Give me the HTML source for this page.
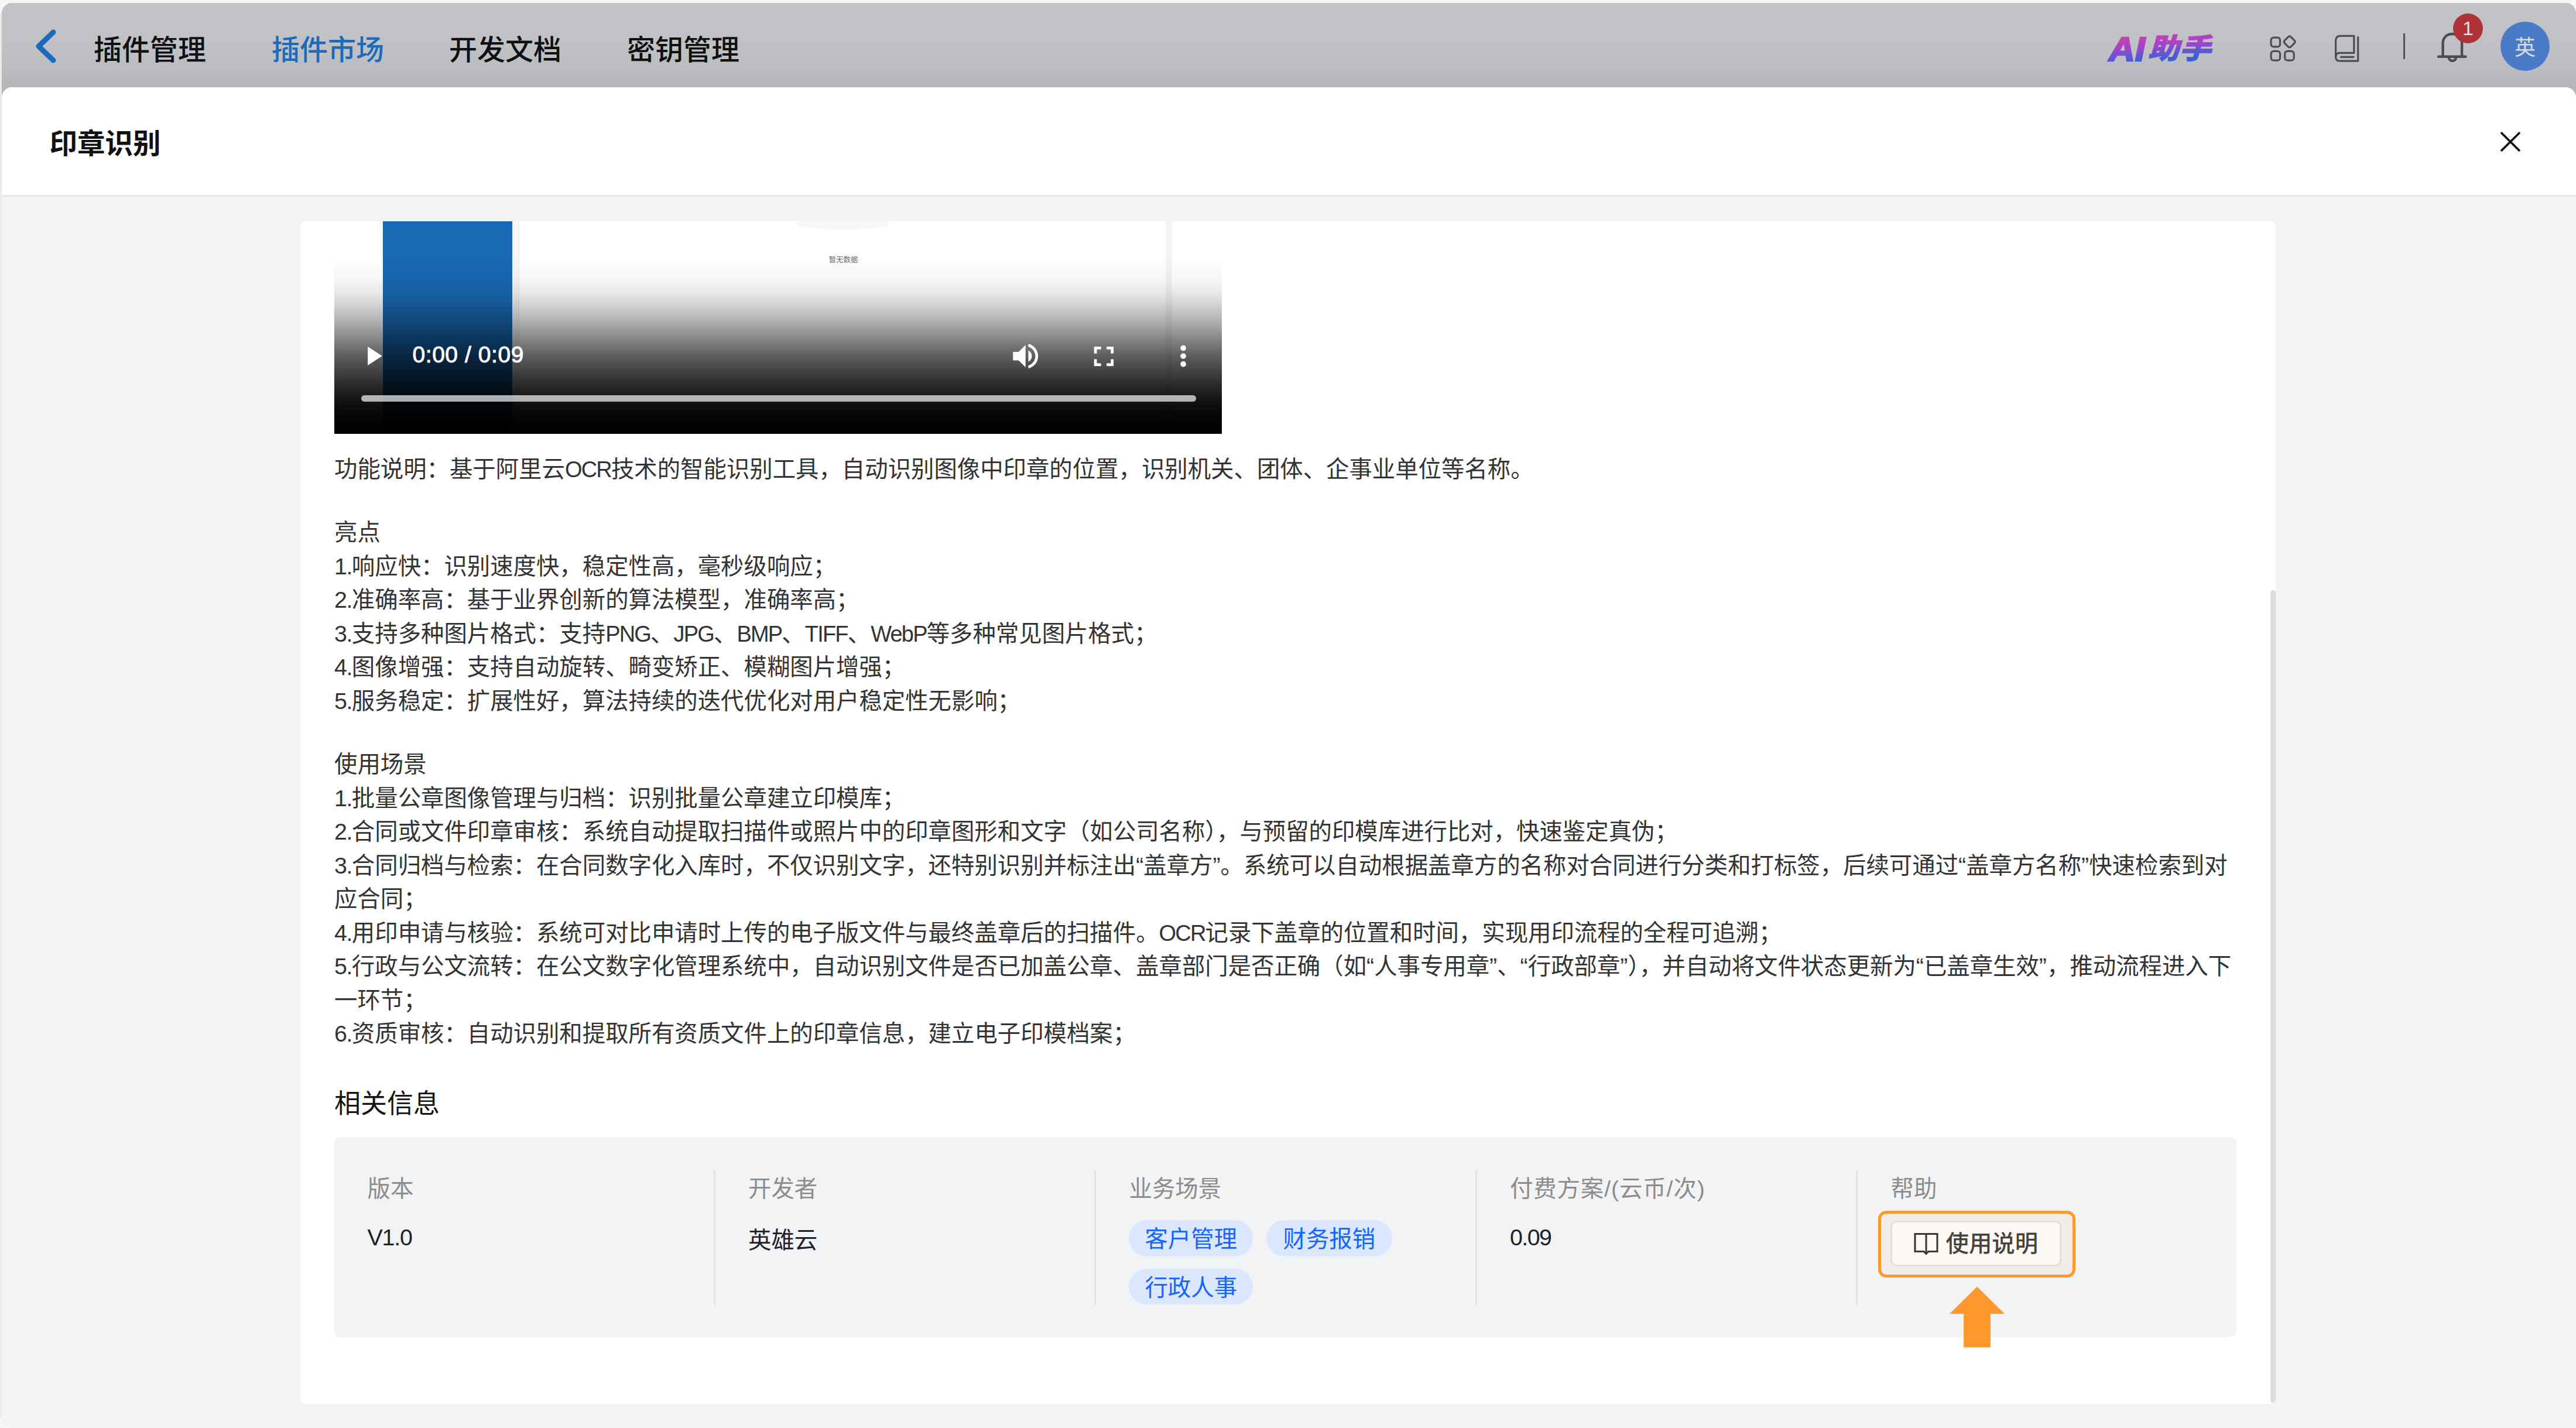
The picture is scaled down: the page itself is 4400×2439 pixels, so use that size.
<!DOCTYPE html>
<html lang="zh-CN">
<head>
<meta charset="utf-8">
<title>印章识别</title>
<style>
html,body{margin:0;padding:0}
body{width:4400px;height:2439px;overflow:hidden;position:relative;background:#f6f6f6;
  font-family:"Liberation Sans","Noto Sans CJK SC",sans-serif;color:#333}
*{box-sizing:border-box}
.abs{position:absolute}
#frame{position:absolute;left:3px;top:5px;width:4397px;height:2434px;border-radius:18px 18px 0 18px;overflow:hidden;background:#f2f3f5}
/* coordinates inside #frame are page coords minus (3,5) */
#topbar{position:absolute;left:0;top:0;width:4397px;height:175px;
  background:linear-gradient(to bottom,#c2c3c7 0%,#c1c2c6 40%,#bcbdc1 75%,#b4b5b9 100%) no-repeat 0 0/100% 146px,#b4b5b9}
.nav{position:absolute;top:47px;height:68px;line-height:68px;font-size:48px;font-weight:500;color:#0f1012;white-space:nowrap}
.nav.on{color:#1c6abb}
#panel{position:absolute;left:0;top:144px;width:4397px;height:2290px;background:#f2f3f5;border-radius:18px 18px 0 0;overflow:hidden}
#phead{position:absolute;left:0;top:0;width:4397px;height:187px;background:#fff;border-bottom:3px solid #e5e6e9}
#ptitle{position:absolute;left:81.5px;top:62px;height:70px;line-height:70px;font-size:47.5px;font-weight:700;color:#111}
#card{position:absolute;left:510px;top:228.5px;width:3374px;height:2020px;background:#fff;border-radius:8px;overflow:hidden}
/* inside card: page coords minus (513,377.5) */
#video{position:absolute;left:57.5px;top:-200px;width:1516.5px;height:563px;background:#fff;overflow:hidden}
/* inside video: page coords minus (570.5,177.5) */
#vgrad{position:absolute;left:0;top:260.5px;width:100%;height:302.5px;
 background:linear-gradient(to bottom,rgba(0,0,0,0) 0%,rgba(0,0,0,.035) 12.7%,rgba(0,0,0,.10) 21.5%,rgba(0,0,0,.215) 30%,rgba(0,0,0,.35) 39%,rgba(0,0,0,.50) 48%,rgba(0,0,0,.64) 56.7%,rgba(0,0,0,.75) 65.5%,rgba(0,0,0,.855) 74.3%,rgba(0,0,0,.94) 83%,rgba(0,0,0,.985) 92%,#000 100%)}
#vtime{position:absolute;left:134px;top:405.5px;height:46px;line-height:46px;font-size:39px;color:#fff;white-space:nowrap;letter-spacing:.55px;-webkit-text-stroke:.9px #fff}
#vbar{position:absolute;left:46px;top:497px;width:1426px;height:11.5px;border-radius:6px;background:rgba(255,255,255,.68)}
#desc{position:absolute;left:58px;top:395px;font-size:39.4px;line-height:57.5px;color:#333;white-space:nowrap}
#desc p{margin:0;padding:0}
#desc span{line-height:0}
#desc .la{font-size:38px;letter-spacing:-1.8px}
#desc .nu{letter-spacing:-1.5px}
#desc p.bl{height:51.1px}
#rel{position:absolute;left:58px;top:1476px;height:64px;line-height:64px;font-size:45px;font-weight:400;color:#141414;white-space:nowrap}
#info{position:absolute;left:58px;top:1564.8px;width:3249px;height:341.5px;border-radius:11px;background:#f2f3f5}
.col{position:absolute;top:56px;height:231px;width:650.5px;border-right:3px solid #e1e2e6}
.lab{position:absolute;left:56.5px;top:2.8px;height:58px;line-height:58px;font-size:39.4px;color:#8c8c8c;white-space:nowrap}
.val{position:absolute;left:56.5px;top:86px;height:58px;line-height:58px;font-size:39.4px;color:#1d2129;white-space:nowrap}
.tag{position:absolute;height:61.5px;line-height:65.5px;border-radius:31px;background:#dbe7fe;color:#1664ff;font-size:39.4px;padding:0 27.2px;white-space:nowrap;overflow:hidden}

</style>
</head>
<body>
<div class="abs" style="left:0;top:22px;width:3px;height:2400px;background:#eaeae8"></div>
<div id="frame">
  <div id="topbar">
    <svg class="abs" style="left:55px;top:43px" width="44" height="66" viewBox="0 0 44 66"><path d="M33 7 L8 31 L33 55" fill="none" stroke="#1c6abb" stroke-width="9" stroke-linecap="round" stroke-linejoin="round"/></svg>
    <div class="nav" style="left:157px">插件管理</div>
    <div class="nav on" style="left:461px">插件市场</div>
    <div class="nav" style="left:764px">开发文档</div>
    <div class="nav" style="left:1068px">密钥管理</div>

    <svg id="ailogo" class="abs" style="left:3590px;top:45px" width="200" height="70" viewBox="0 0 200 70">
      <defs><linearGradient id="lg" gradientUnits="userSpaceOnUse" x1="10" y1="8" x2="15.8" y2="71.5"><stop offset="0" stop-color="#e23aa6"/><stop offset=".45" stop-color="#9a46cc"/><stop offset=".75" stop-color="#4a5cd4"/><stop offset="1" stop-color="#2068d2"/></linearGradient></defs>
      <g font-family="'Liberation Sans','Noto Sans CJK SC',sans-serif" font-style="italic" fill="url(#lg)" stroke="url(#lg)" stroke-linejoin="miter">
        <text x="9" y="53.5" font-size="57" font-weight="700" stroke-width="2.6" textLength="62" lengthAdjust="spacingAndGlyphs">AI</text>
        <text x="75.5" y="49.8" font-size="48" font-weight="900" stroke-width=".8" textLength="108" lengthAdjust="spacingAndGlyphs">助手</text>
      </g>
    </svg>
    <svg class="abs" style="left:3870px;top:50px" width="60" height="60" viewBox="0 0 60 60" fill="none" stroke="#4b4d54" stroke-width="3.2" stroke-linejoin="round">
      <rect x="6.1" y="9.1" width="15.4" height="15.8" rx="4.5"/>
      <rect x="6.1" y="32.4" width="15.4" height="15.8" rx="4.5"/>
      <rect x="29.7" y="32.4" width="15.5" height="15.8" rx="4.5"/>
      <rect x="30.2" y="8.9" width="15" height="15" rx="2.8" transform="rotate(45 37.7 16.4)"/>
    </svg>
    <svg class="abs" style="left:3982px;top:52px" width="50" height="54" viewBox="0 0 50 54" fill="none" stroke="#4b4d54" stroke-width="3.2" stroke-linejoin="round" stroke-linecap="round">
      <path d="M35.8 4.3 H12.6 Q4.6 4.3 4.6 12.3 V40.2"/>
      <path d="M35.8 4.3 V33.3 H11.6 Q4.6 33.3 4.6 40.2 Q4.6 47.1 11.6 47.1 H42.7 V6.5"/>
      <path d="M13.5 40.3 H35"/>
    </svg>
    <div class="abs" style="left:4102px;top:52px;width:3px;height:44px;background:#50525a"></div>
    <svg class="abs" style="left:4155px;top:46px" width="62" height="62" viewBox="0 0 62 62" fill="none" stroke="#4b4d54" stroke-width="4.4" stroke-linecap="round" stroke-linejoin="round">
      <path d="M7 45.8 H53.5"/>
      <path d="M14.6 45.8 V23 C14.6 13 21.5 7 30.9 7 C40.3 7 47.1 13 47.1 23 V45.8"/>
      <path d="M24.7 46.8 A6.2 6.2 0 0 0 37.1 46.8"/>
    </svg>
    <div class="abs" style="left:4187px;top:18px;width:51px;height:51px;border-radius:50%;background:#ad3336;color:#f3dede;font-size:34px;line-height:51px;text-align:center">1</div>
    <div class="abs" style="left:4268px;top:32px;width:84px;height:84px;border-radius:50%;background:#4a7bc8;color:#d9dce2;font-size:36px;line-height:89px;text-align:center">英</div>
  </div>
  <div id="panel">
    <div id="phead">
      <div id="ptitle">印章识别</div>

      <svg class="abs" style="left:4259px;top:67px" width="52" height="52" viewBox="0 0 52 52" fill="none" stroke="#111" stroke-width="3.7" stroke-linecap="butt"><path d="M9.9 10.3 L42 42 M42 10.3 L9.9 42"/></svg>
    </div>
    <div id="card">

      <div id="video">
        <div class="abs" style="left:83.2px;top:0;width:221.3px;height:563px;background:#1868b3"></div>
        <div class="abs" style="left:304.5px;top:0;width:12px;height:563px;background:#f7f7f9;border-right:1.5px solid #eaeaec"></div>
        <div class="abs" style="left:1420.5px;top:0;width:11px;height:563px;background:#f3f4f6"></div>
        <div class="abs" style="left:789px;top:196px;width:160px;height:18px;border-radius:50%;background:#f7f7f8"></div>
        <div class="abs" style="left:820px;top:256px;width:100px;height:20px;line-height:20px;text-align:center;font-size:12.4px;color:#6a6a6a">暂无数据</div>
        <div id="vgrad"></div>
        <svg class="abs" style="left:0;top:380px" width="1516" height="100" viewBox="0 380 1516 100" fill="#fff">
          <path d="M57.2 413.9 L81.7 430 L57.2 446.1 Z"/>
          <g transform="translate(1152.1 401.6) scale(2.385)"><path d="M3 9v6h4l5 5V4L7 9H3zm13.5 3c0-1.77-1.02-3.29-2.5-4.03v8.05c1.48-.73 2.5-2.25 2.5-4.02zM14 3.23v2.06c2.89.86 5 3.54 5 6.71s-2.11 5.85-5 6.71v2.06c4.01-.91 7-4.49 7-8.77s-2.99-7.86-7-8.77z"/></g>
          <g transform="translate(1285.8 402) scale(2.385)"><path d="M7 14H5v5h5v-2H7v-3zm-2-4h2V7h3V5H5v5zm12 7h-3v2h5v-5h-2v3zM14 5v2h3v3h2V5h-5z"/></g>
          <circle cx="1450.1" cy="416.5" r="4.8"/><circle cx="1450.1" cy="430.2" r="4.8"/><circle cx="1450.1" cy="443.9" r="4.8"/>
        </svg>
        <div id="vtime">0:00 / 0:09</div>
        <div id="vbar"></div>
      </div>
      <div id="desc">
        <p>功能说明：基于阿里云<span class="la">OCR</span>技术的智能识别工具，自动识别图像中印章的位置，识别机关、团体、企事业单位等名称。</p>
        <p class="bl"></p>
        <p>亮点</p>
        <p><span class="nu">1.</span>响应快：识别速度快，稳定性高，毫秒级响应；</p>
        <p><span class="nu">2.</span>准确率高：基于业界创新的算法模型，准确率高；</p>
        <p><span class="nu">3.</span>支持多种图片格式：支持<span class="la">PNG</span>、<span class="la">JPG</span>、<span class="la">BMP</span>、<span class="la">TIFF</span>、<span class="la">WebP</span>等多种常见图片格式；</p>
        <p><span class="nu">4.</span>图像增强：支持自动旋转、畸变矫正、模糊图片增强；</p>
        <p><span class="nu">5.</span>服务稳定：扩展性好，算法持续的迭代优化对用户稳定性无影响；</p>
        <p class="bl"></p>
        <p>使用场景</p>
        <p><span class="nu">1.</span>批量公章图像管理与归档：识别批量公章建立印模库；</p>
        <p><span class="nu">2.</span>合同或文件印章审核：系统自动提取扫描件或照片中的印章图形和文字（如公司名称），与预留的印模库进行比对，快速鉴定真伪；</p>
        <p><span class="nu">3.</span>合同归档与检索：在合同数字化入库时，不仅识别文字，还特别识别并标注出“盖章方”。系统可以自动根据盖章方的名称对合同进行分类和打标签，后续可通过“盖章方名称”快速检索到对<br>应合同；</p>
        <p><span class="nu">4.</span>用印申请与核验：系统可对比申请时上传的电子版文件与最终盖章后的扫描件。<span class="la">OCR</span>记录下盖章的位置和时间，实现用印流程的全程可追溯；</p>
        <p><span class="nu">5.</span>行政与公文流转：在公文数字化管理系统中，自动识别文件是否已加盖公章、盖章部门是否正确（如“人事专用章”、“行政部章”），并自动将文件状态更新为“已盖章生效”，推动流程进入下<br>一环节；</p>
        <p><span class="nu">6.</span>资质审核：自动识别和提取所有资质文件上的印章信息，建立电子印模档案；</p>
      </div>
      <div id="rel">相关信息</div>
      <div id="info">
        <div class="col" style="left:0"><div class="lab">版本</div><div class="val" style="letter-spacing:-1.2px">V1.0</div></div>
        <div class="col" style="left:650.5px"><div class="lab">开发者</div><div class="val" style="top:90.5px">英雄云</div></div>
        <div class="col" style="left:1301px"><div class="lab">业务场景</div>
          <div class="tag" style="left:56.3px;top:85.9px">客户管理</div>
          <div class="tag" style="left:291px;top:85.9px;padding:0 28.5px">财务报销</div>
          <div class="tag" style="left:56.3px;top:168.7px">行政人事</div>
        </div>
        <div class="col" style="left:1951.5px"><div class="lab" style="letter-spacing:.9px">付费方案/(云币/次)</div><div class="val" style="letter-spacing:-1.6px">0.09</div></div>
        <div class="col" style="left:2602px;border-right:none"><div class="lab">帮助</div></div>
        <div id="hl" class="abs" style="left:2637px;top:125.7px;width:336.5px;height:114.3px;border:5px solid #ff992b;border-radius:14px;background:#f2ede9"></div>
        <div id="btn" class="abs" style="left:2658px;top:142.4px;width:292px;height:78px;border:3px solid #e3ded9;border-radius:11px;background:#fef9f4"></div>
        <svg class="abs" style="left:2696px;top:160px" width="46" height="44" viewBox="0 0 46 44" fill="none" stroke="#3b3733" stroke-width="3.1" stroke-linejoin="miter"><path d="M4 5.5 H42 V35.5 H27 L23 39.5 L19 35.5 H4 Z"/><path d="M23 5.5 V38"/></svg>
        <div id="btxt" class="abs" style="left:2752.5px;top:153px;height:58px;line-height:58px;font-size:39.4px;font-weight:500;color:#47423d;white-space:nowrap">使用说明</div>
      </div>
      <svg class="abs" style="left:2800px;top:1810px" width="130" height="120" viewBox="0 0 130 120"><path d="M64 9.4 L111.1 56 H87 V113.3 H41.1 V56 H17 Z" fill="#ff992e"/></svg>
      <div id="sbar" class="abs" style="left:3364.5px;top:630px;width:9px;height:1388px;border-radius:5px;background:#dcdddf"></div>
    </div>
  </div>
</div>
</body>
</html>
